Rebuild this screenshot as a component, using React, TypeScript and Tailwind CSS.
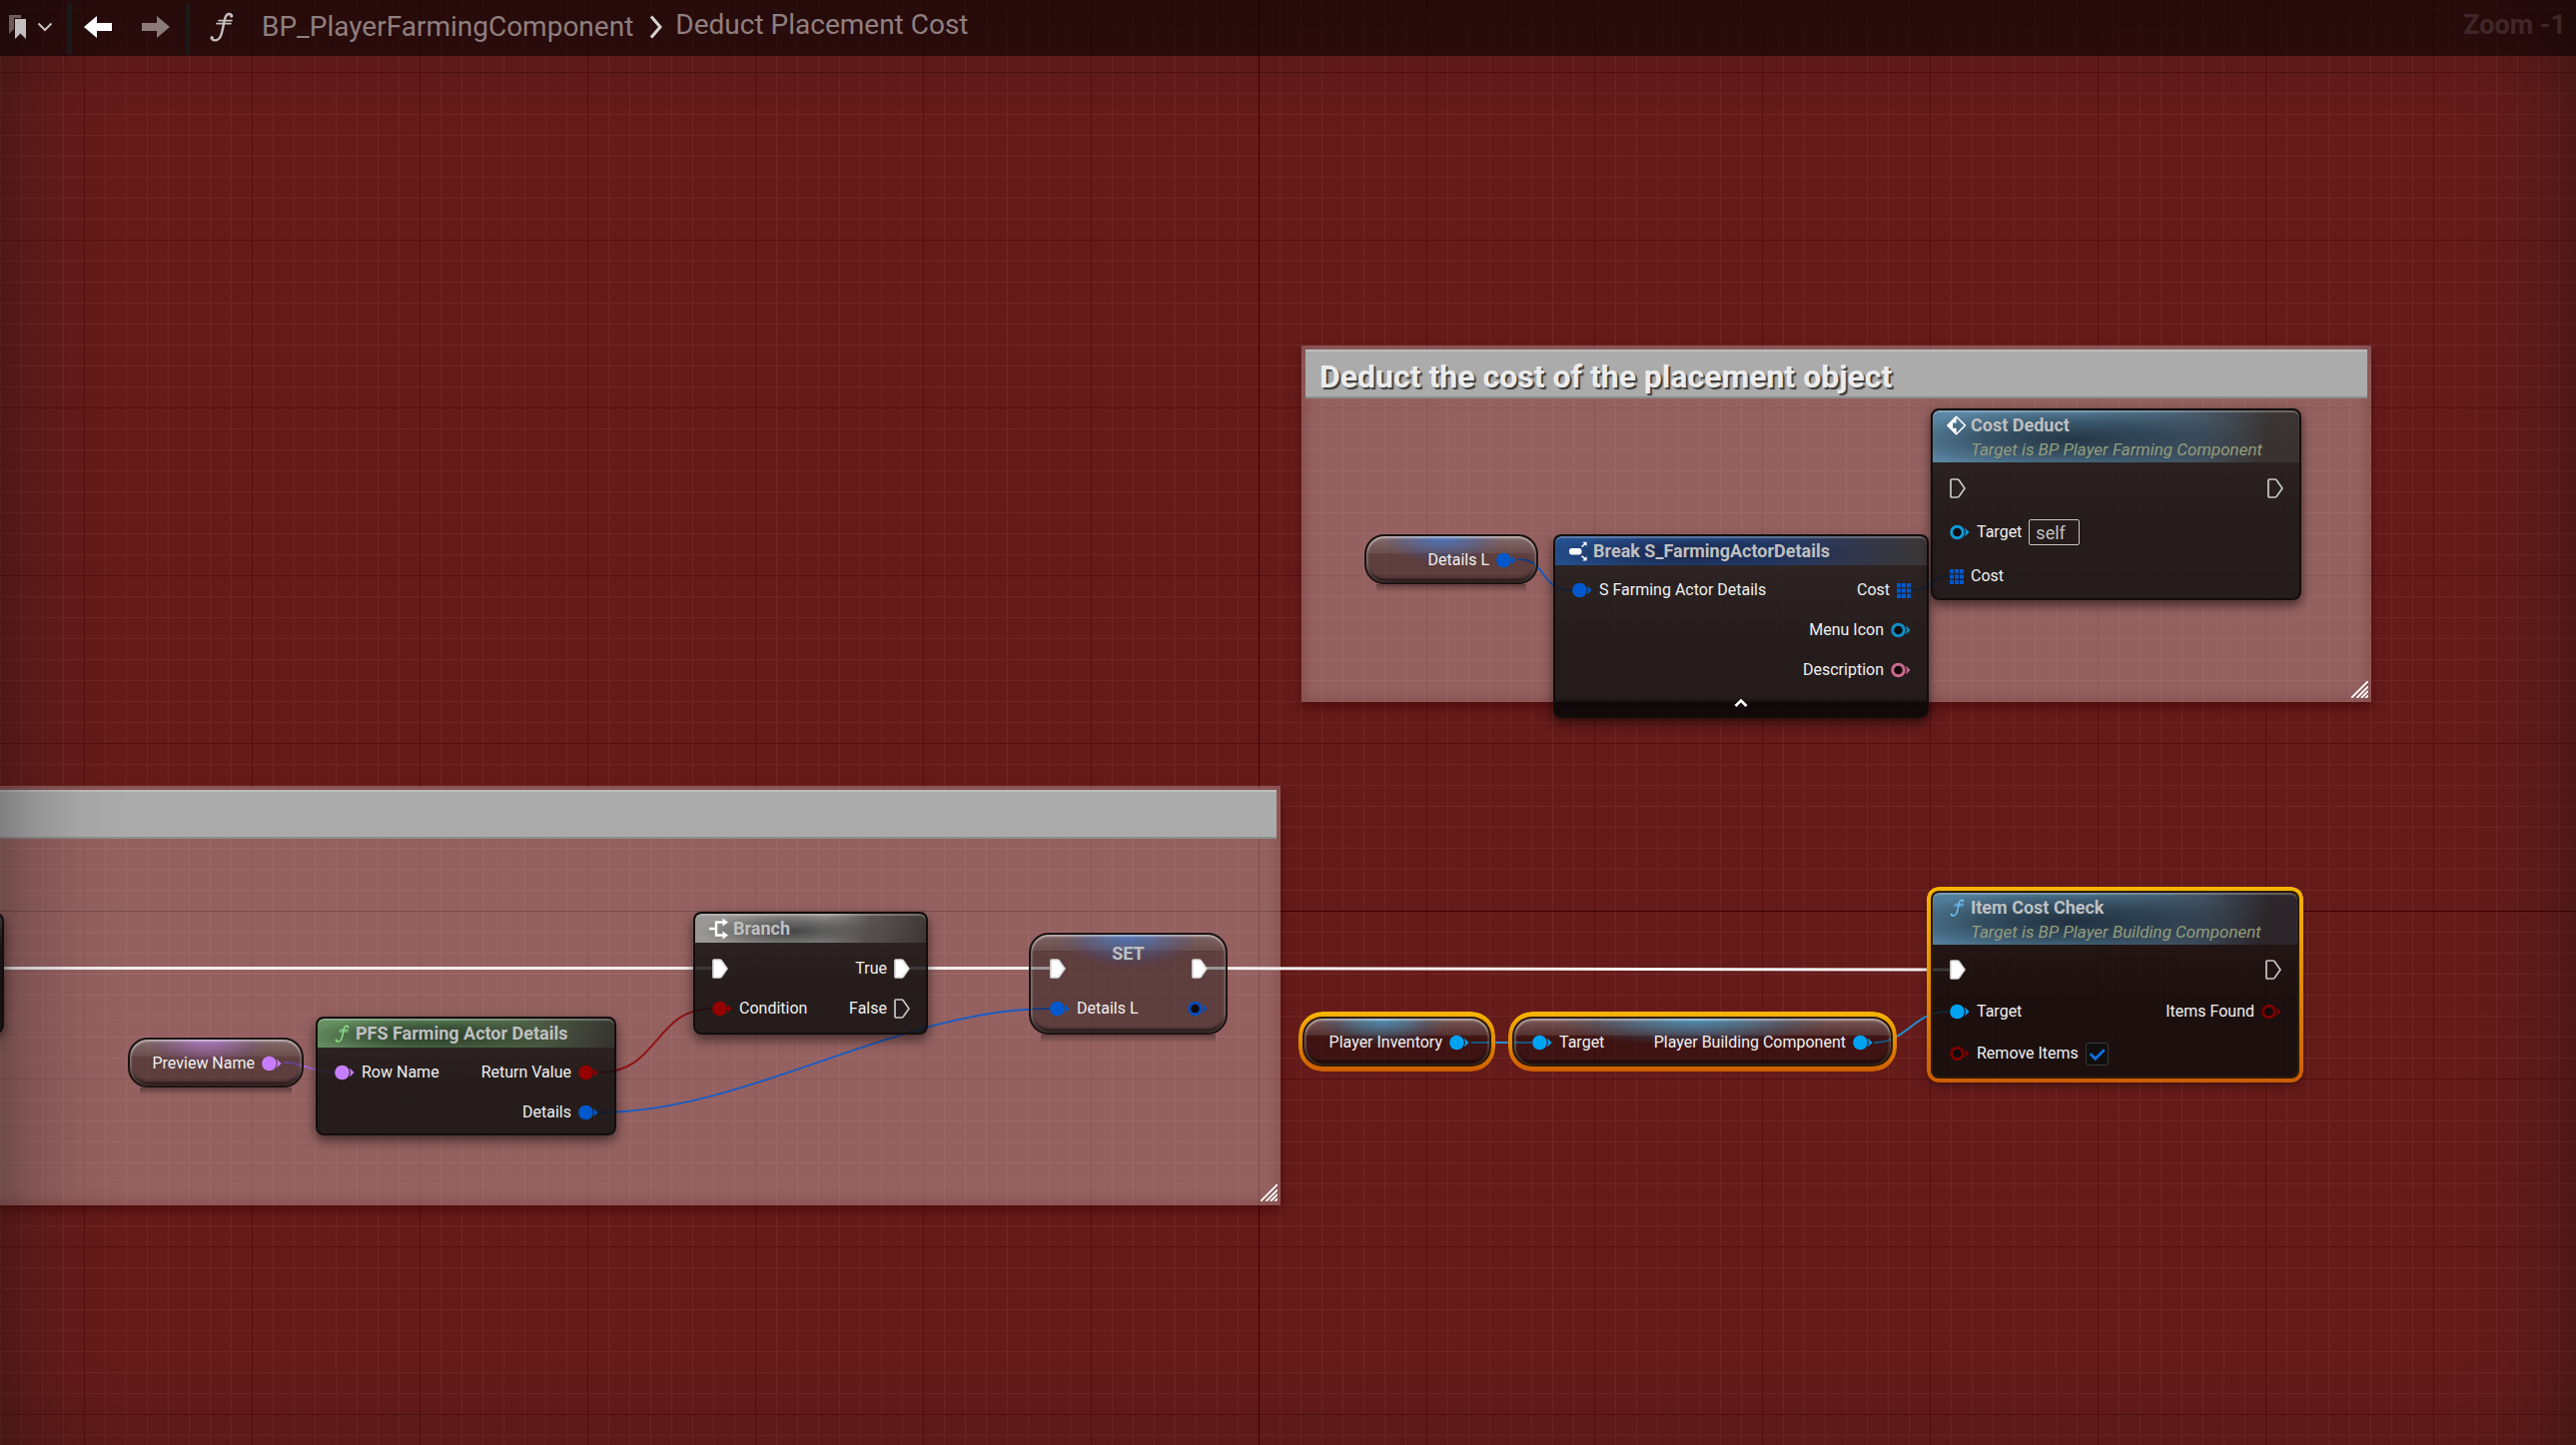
import type { ReactNode } from "react";

const BLUE = "#0058cc";
const SKY = "#00a2f2";
const RED = "#950000";
const VIOLET = "#c77dff";
const PINK = "#c9688f";

/* ---------- pins ---------- */

function Pin({ color, hollow = false }: { color: string; hollow?: boolean }) {
  return (
    <svg width="20" height="16" viewBox="0 0 20 16" className="shrink-0" aria-hidden="true">
      {hollow ? (
        <circle cx="7.5" cy="8" r="5.8" fill="#100c0c" stroke={color} strokeWidth="3" />
      ) : (
        <circle cx="7.5" cy="8" r="7.3" fill={color} />
      )}
      <path d="M15 3.6 L19.6 8 L15 12.4 Q16.8 8 15 3.6 Z" fill={color} />
    </svg>
  );
}

function ExecPin({ filled = false }: { filled?: boolean }) {
  return (
    <svg width="16" height="20" viewBox="0 0 16 20" className="shrink-0" aria-hidden="true">
      <path
        d="M1 2 Q1 1 2 1 H7.5 Q8.5 1 9.2 1.8 L15 10 L9.2 18.2 Q8.5 19 7.5 19 H2 Q1 19 1 18 Z"
        fill={filled ? "#ffffff" : "none"}
        stroke={filled ? "#d8d8d8" : "#c9c9c9"}
        strokeWidth="1.7"
      />
    </svg>
  );
}

function ArrayPin() {
  return (
    <svg width="14" height="15" viewBox="0 0 14 15" className="shrink-0" aria-hidden="true">
      {[0, 5, 10].map((x) =>
        [0, 5.4, 10.8].map((y) => <rect key={`${x}-${y}`} x={x} y={y} width="4" height="4.2" fill={BLUE} />),
      )}
    </svg>
  );
}

/* ---------- icons ---------- */

function FunctionIcon({ className }: { className: string }) {
  return (
    <svg viewBox="0 0 24 30" className={className} fill="none" stroke="currentColor" strokeLinecap="round" aria-hidden="true">
      <path d="M22 4.2 C21.5 1.2 17.2 .8 15.6 5.4 C14.2 9.6 13 18 11.4 23 C9.8 28.4 4 30 1.8 26.4" strokeWidth="2.4" />
      <circle cx="21.6" cy="4" r="1.1" fill="currentColor" />
      <circle cx="2.2" cy="25.6" r="1.1" fill="currentColor" />
      <path d="M9 8.6 H22" strokeWidth="1.7" />
      <path d="M7 11.6 H21" strokeWidth="1.7" />
    </svg>
  );
}

function BreakIcon() {
  return (
    <svg width="20" height="20" viewBox="0 0 20 20" aria-hidden="true">
      <rect x="0" y="7" width="12.5" height="6.4" rx="2.6" fill="#fff" />
      <path d="M12.5 5.5 L16 2.5 M12.5 14.8 L16 17.6" stroke="#fff" strokeWidth="1.6" />
      <path d="M13.4 .8 H17.6 V5 Z M13.4 19.4 H17.6 V15 Z" fill="#fff" />
    </svg>
  );
}

function BranchIcon() {
  return (
    <svg width="20" height="22" viewBox="0 0 20 22" aria-hidden="true">
      <path d="M0 11 H6 M14 4.5 H7 V17.5 H14" fill="none" stroke="#fff" strokeWidth="2.4" />
      <path d="M13.5 .6 L19 4.5 L13.5 8.4 Z M13.5 13.6 L19 17.5 L13.5 21.4 Z" fill="#fff" />
    </svg>
  );
}

function EventIcon() {
  return (
    <svg width="20" height="20" viewBox="0 0 20 20" aria-hidden="true">
      <path d="M9.6 1.2 L18.4 10 L9.6 18.8 L.8 10 Z" fill="none" stroke="#fff" strokeWidth="1.6" strokeLinejoin="round" />
      <path d="M9.6 1 L.6 10 L9.6 19 V12.8 H6 V7.4 H9.6 Z" fill="#fff" />
    </svg>
  );
}

function ResizeHandle() {
  return (
    <svg width="17" height="17" viewBox="0 0 17 17" className="absolute right-[3px] bottom-1" aria-hidden="true">
      <path d="M0 17 L17 0 M5.5 17 L17 5.5 M10 17 L17 10 M14.4 17 L17 14.4" stroke="#fff" strokeWidth="1.9" />
    </svg>
  );
}

/* ---------- node building blocks ---------- */

function SelectionRing({ className }: { className: string }) {
  return (
    <span
      className={`pointer-events-none absolute bg-linear-to-b from-[#f7b500] to-[#cc5c00] [mask:linear-gradient(#000_0_0)_content-box_exclude,linear-gradient(#000_0_0)] ${className}`}
    />
  );
}

function Node({
  place,
  header,
  icon,
  title,
  subtitle,
  selected = false,
  children,
}: {
  place: string;
  header: string;
  icon: ReactNode;
  title: string;
  subtitle?: string;
  selected?: boolean;
  children: ReactNode;
}) {
  return (
    <article className={`absolute rounded-lg shadow-[0_5px_12px_rgba(0,0,0,0.55)] ${place}`}>
      <div
        className={`overflow-hidden rounded-lg border-2 bg-linear-to-b from-[#1a1a19]/82 to-[#0c0d0c]/82 to-60% ${
          selected ? "border-[#2c1c06]" : "border-[#120d0c]"
        }`}
      >
        <header
          className={`flex gap-1 rounded-t-md pl-[14px] shadow-[inset_0_2px_1px_rgba(255,255,255,0.25)] ${
            subtitle ? "h-[52px] pt-0.5" : "h-[29px] items-center"
          } ${header}`}
        >
          <span className="flex h-[26px] w-5 shrink-0 items-center justify-center">{icon}</span>
          <span className="flex flex-col">
            <h3 className="text-[18px] leading-[26px] font-bold whitespace-nowrap text-[#bfc0c1]">{title}</h3>
            {subtitle && (
              <p className="text-[17px] leading-[22px] whitespace-nowrap text-[#949d7c] italic">{subtitle}</p>
            )}
          </span>
        </header>
        {children}
      </div>
      {selected && <SelectionRing className="-inset-1 rounded-xl p-1" />}
    </article>
  );
}

function Row({ height, left, right }: { height: string; left?: ReactNode; right?: ReactNode }) {
  return (
    <div className={`flex items-center justify-between pr-4 pl-[17px] ${height}`}>
      <div className="flex items-center gap-[7px]">{left}</div>
      <div className="flex items-center gap-[7px]">{right}</div>
    </div>
  );
}

function Label({ children }: { children: ReactNode }) {
  return <span className="text-[16px] leading-5 whitespace-nowrap text-[#f0f0f0]">{children}</span>;
}

function Pill({
  place,
  glow,
  selected = false,
  children,
}: {
  place: string;
  glow: string;
  selected?: boolean;
  children: ReactNode;
}) {
  return (
    <article className={`absolute rounded-[20px] ${place}`}>
      <div
        className={`relative flex h-full w-full flex-col justify-center overflow-hidden rounded-[20px] border-2 shadow-[inset_0_2px_2px_rgba(255,255,255,0.45),inset_2px_0_2px_rgba(255,255,255,0.2),inset_-2px_0_2px_rgba(255,255,255,0.15),inset_0_-4px_3px_rgba(0,0,0,0.55)] ${
          selected ? "border-[#2c1c06]" : "border-[#1c1312]"
        } ${glow}`}
      >
        {children}
      </div>
      {selected ? (
        <SelectionRing className="-inset-x-1 -inset-y-[5px] rounded-[24px] px-1 py-[5px]" />
      ) : (
        <span className="pointer-events-none absolute inset-x-3 top-full h-2 bg-linear-to-b from-black/35 to-transparent" />
      )}
    </article>
  );
}

function CommentBox({ place, title }: { place: string; title: string }) {
  return (
    <section
      className={`absolute bg-white/31 px-1 pt-1 shadow-[0_6px_10px_rgba(60,0,0,0.5),inset_0_0_14px_rgba(90,20,20,0.35)] ${place}`}
    >
      <h2 className="h-[49px] border-t-2 border-b-2 border-t-[#bdbdbd] border-b-[#8c8e8e] bg-[#ababab] pl-3.5 text-[32px] leading-[50px] font-bold whitespace-nowrap text-[#ececec] [text-shadow:2px_2px_1px_#3a3a3a]">
        {title}
      </h2>
      <ResizeHandle />
    </section>
  );
}

/* ---------- wires ---------- */

function Wires() {
  return (
    <svg className="pointer-events-none absolute inset-0 h-full w-full" fill="none" aria-hidden="true">
      <g stroke="#f2eeee" strokeWidth="3">
        <path d="M4 969.5 H713" />
        <path d="M911 969.5 H1051" />
        <path d="M1208 969.5 L1952 971" />
      </g>
      <g strokeWidth="2">
        <path d="M284 1064 C305 1064 312 1074 335 1074" stroke="#a06ae0" />
        <path d="M600 1074 C660 1074 655 1010 713 1010" stroke="#8f1414" />
        <path d="M600 1114 C748 1114 900 1010 1051 1010" stroke="#1b5cc4" />
        <path d="M1520 560 C1550 560 1540 591 1574 591" stroke="#1b5cc4" />
        <path d="M1915 591 C1935 591 1932 577 1951 577" stroke="#1b5cc4" />
        <path d="M1473 1044 H1534" stroke="#2090d8" />
        <path d="M1876 1044 C1910 1044 1915 1013 1951 1013" stroke="#2090d8" />
      </g>
    </svg>
  );
}

/* ---------- page ---------- */

function TopBar() {
  return (
    <header className="z-10 col-start-1 row-start-1 flex h-14 items-start justify-between self-start bg-black/55 pr-2.5 pl-2">
      <nav className="flex items-center" aria-label="Breadcrumb">
        <button type="button" aria-label="Bookmarks" className="flex h-[54px] items-center">
          <svg width="19" height="26" viewBox="0 0 19 26" aria-hidden="true">
            <path d="M1 1 H13 V4 H6 V15 L1 20 Z" fill="#6e5c5c" />
            <path d="M7 5 H18 V25 L12.5 19.5 L7 25 Z" fill="#c4bfbf" />
          </svg>
          <svg width="16" height="10" viewBox="0 0 16 10" className="ml-2.5" fill="none" aria-hidden="true">
            <path d="M1.5 1.5 L8 8 L14.5 1.5" stroke="#c4bfbf" strokeWidth="2" />
          </svg>
        </button>
        <span className="mt-0.5 ml-3.5 h-[51px] w-[5px] bg-[#1a1a1a]" />
        <button type="button" aria-label="Back" className="ml-3 flex h-[50px] items-center">
          <svg width="28" height="24" viewBox="0 0 28 24" aria-hidden="true">
            <path d="M0 12 L13 1 V8 H28 V16 H13 V23 Z" fill="#fff" />
          </svg>
        </button>
        <button type="button" aria-label="Forward" className="ml-[30px] flex h-[50px] items-center">
          <svg width="28" height="24" viewBox="0 0 28 24" aria-hidden="true">
            <path d="M28 12 L15 1 V8 H0 V16 H15 V23 Z" fill="#8a7a7a" />
          </svg>
        </button>
        <span className="mt-0.5 ml-4 h-[51px] w-1 bg-[#1a1a1a]" />
        <FunctionIcon className="ml-5 h-[30px] w-6 text-[#c4bfbf]" />
        <a href="#component" className="ml-7 text-[28px] leading-[54px] text-[#8f7f7f]">
          BP_PlayerFarmingComponent
        </a>
        <svg width="14" height="24" viewBox="0 0 14 24" className="ml-4" fill="none" aria-hidden="true">
          <path d="M2 1.5 L11 12 L2 22.5" stroke="#d8d2d2" strokeWidth="3" />
        </svg>
        <a href="#function" className="mb-1 ml-3 text-[28px] leading-[50px] text-[#8f7f7f]">
          Deduct Placement Cost
        </a>
      </nav>
      <p className="text-[27px] leading-[50px] font-bold text-[#402628]">Zoom -1</p>
    </header>
  );
}

export default function App() {
  return (
    <div className="grid min-h-screen overflow-hidden font-['Roboto','Liberation_Sans',sans-serif]">
      <TopBar />
      <main className="relative col-start-1 row-start-1 min-h-screen overflow-hidden bg-[#651b1a] bg-[linear-gradient(#3f0000,#3f0000),linear-gradient(#3f0000,#3f0000),linear-gradient(to_right,#560e0f_1px,transparent_1px),linear-gradient(#560e0f_1px,transparent_1px),linear-gradient(to_right,#702625_1px,transparent_1px),linear-gradient(#702625_1px,transparent_1px)] [background-position:1260px_0,0_912px,84px_0,0_72px,0_0,0_9px] [background-repeat:no-repeat,no-repeat,repeat,repeat,repeat,repeat] [background-size:1px_100%,100%_1px,168px_168px,168px_168px,21px_21px,21px_21px]">
        <CommentBox place="left-[1303px] top-[346px] h-[357px] w-[1071px]" title="Deduct the cost of the placement object" />
        <CommentBox place="-left-5 top-[787px] h-[420px] w-[1302px]" title="" />

        <Wires />

        <span className="absolute top-[914px] -left-4 h-[121px] w-5 rounded-lg border-2 border-[#120d0c] bg-linear-to-b from-[#4a4544] to-[#1a1513] to-30% shadow-[0_5px_12px_rgba(0,0,0,0.55)]" />

        <Pill
          place="left-[1366px] top-[535px] h-[50px] w-[174px]"
          glow="bg-[radial-gradient(ellipse_36%_60%_at_45%_0%,rgba(50,120,220,0.7),rgba(50,90,180,0.2)_75%,transparent),linear-gradient(rgba(255,255,255,0.24),rgba(255,255,255,0.08)_36%,transparent_36%),linear-gradient(rgba(8,8,8,0.39),rgba(8,8,8,0.39))]"
        >
          <div className="flex items-center justify-end gap-[7px] px-5 pt-0.5">
            <Label>Details L</Label>
            <Pin color={BLUE} />
          </div>
        </Pill>

        <Node
          place="left-[1555px] top-[535px] w-[376px]"
          header="bg-[radial-gradient(ellipse_42%_70%_at_38%_60%,rgba(26,32,64,0.9),rgba(26,32,64,0.55)_50%,transparent),linear-gradient(100deg,#24508f_45%,rgba(44,72,128,0.5)_75%,rgba(70,66,64,0.6))]"
          icon={<BreakIcon />}
          title="Break S_FarmingActorDetails"
        >
          <div className="pt-[5px]">
            <Row height="h-10" left={<><Pin color={BLUE} /><Label>S Farming Actor Details</Label></>} right={<><Label>Cost</Label><ArrayPin /></>} />
            <Row height="h-10" right={<><Label>Menu Icon</Label><Pin color="#0f8ec6" hollow /></>} />
            <Row height="h-10" right={<><Label>Description</Label><Pin color={PINK} hollow /></>} />
          </div>
          <button type="button" aria-label="Collapse" className="mt-2 flex h-[18px] w-full justify-center bg-linear-to-b from-transparent via-black/35 via-20% to-black/35">
            <svg width="14" height="10" viewBox="0 0 14 10" fill="none" aria-hidden="true">
              <path d="M1.5 8 L7 2.5 L12.5 8" stroke="#fff" strokeWidth="2.6" />
            </svg>
          </button>
        </Node>

        <Node
          place="left-[1933px] top-[409px] w-[371px]"
          header="bg-[radial-gradient(ellipse_48%_62%_at_38%_56%,rgba(34,50,64,0.95),rgba(34,50,64,0.6)_50%,transparent),linear-gradient(105deg,#5a86a3_40%,rgba(84,118,144,0.6)_72%,rgba(70,66,64,0.5)_90%)]"
          icon={<EventIcon />}
          title="Cost Deduct"
          subtitle="Target is BP Player Farming Component"
        >
          <div className="pt-1">
            <Row height="h-11" left={<ExecPin />} right={<ExecPin />} />
            <Row
              height="h-11"
              left={
                <>
                  <Pin color="#0f9ad6" hollow />
                  <label htmlFor="target" className="text-[16px] leading-5 text-[#f0f0f0]">Target</label>
                  <input
                    id="target"
                    defaultValue="self"
                    className="h-[26px] w-[51px] rounded-xs border border-[#c4c4c4] bg-transparent px-1.5 text-[18px] leading-5 text-[#c2c2c2]"
                  />
                </>
              }
            />
            <Row height="h-11" left={<><ArrayPin /><Label>Cost</Label></>} />
          </div>
        </Node>

        <Pill
          place="left-[128px] top-[1039px] h-[50px] w-[176px]"
          glow="bg-[radial-gradient(ellipse_36%_60%_at_45%_0%,rgba(190,125,235,0.65),rgba(130,80,160,0.2)_75%,transparent),linear-gradient(rgba(255,255,255,0.24),rgba(255,255,255,0.08)_36%,transparent_36%),linear-gradient(rgba(8,8,8,0.39),rgba(8,8,8,0.39))]"
        >
          <div className="flex items-center justify-end gap-[7px] px-5 pt-0.5">
            <Label>Preview Name</Label>
            <Pin color={VIOLET} />
          </div>
        </Pill>

        <Node
          place="left-[316px] top-[1018px] w-[301px]"
          header="bg-[radial-gradient(ellipse_42%_70%_at_38%_60%,rgba(34,46,32,0.9),rgba(34,46,32,0.55)_50%,transparent),linear-gradient(105deg,#658f60_40%,rgba(96,130,90,0.6)_72%,rgba(60,60,56,0.6))]"
          icon={<FunctionIcon className="h-[18px] w-[15px] text-[#90e08c]" />}
          title="PFS Farming Actor Details"
        >
          <div className="pt-[5px] pb-px">
            <Row height="h-10" left={<><Pin color={VIOLET} /><Label>Row Name</Label></>} right={<><Label>Return Value</Label><Pin color={RED} /></>} />
            <Row height="h-10" right={<><Label>Details</Label><Pin color={BLUE} /></>} />
          </div>
        </Node>

        <Node
          place="left-[694px] top-[913px] w-[235px]"
          header="bg-[radial-gradient(ellipse_40%_66%_at_42%_60%,rgba(60,60,60,0.9),rgba(60,60,60,0.5)_50%,transparent),linear-gradient(105deg,#9a9897_55%,rgba(120,116,114,0.6)_74%,rgba(70,66,64,0.6))]"
          icon={<BranchIcon />}
          title="Branch"
        >
          <div className="pt-1.5 pb-1">
            <Row height="h-10" left={<ExecPin filled />} right={<><Label>True</Label><ExecPin filled /></>} />
            <Row height="h-10" left={<><Pin color={RED} /><Label>Condition</Label></>} right={<><Label>False</Label><ExecPin /></>} />
          </div>
        </Node>

        <Pill
          place="left-[1030px] top-[934px] h-[102px] w-[199px]"
          glow="bg-[radial-gradient(ellipse_36%_34%_at_50%_0%,rgba(60,125,215,0.7),rgba(60,80,160,0.18)_80%,transparent),linear-gradient(rgba(255,255,255,0.2),rgba(255,255,255,0.08)_16%,transparent_16%),linear-gradient(rgba(8,8,8,0.39),rgba(8,8,8,0.39))]"
        >
          <h3 className="absolute inset-x-0 top-[7px] text-center text-[18px] leading-6 font-bold text-[#bfc0c1]">SET</h3>
          <div className="px-0.5 pt-2.5">
            <Row height="h-10" left={<ExecPin filled />} right={<ExecPin filled />} />
            <Row height="h-10" left={<><Pin color={BLUE} /><Label>Details L</Label></>} right={<Pin color="#0a4cb4" hollow />} />
          </div>
        </Pill>

        <Pill
          place="left-[1304px] top-[1018px] h-[50px] w-[189px]"
          selected
          glow="bg-[radial-gradient(ellipse_36%_60%_at_42%_0%,rgba(60,160,210,0.75),rgba(50,90,120,0.3)_75%,transparent),linear-gradient(rgba(255,255,255,0.3),rgba(255,255,255,0.12)_36%,transparent_36%),linear-gradient(rgba(8,8,8,0.42),rgba(8,8,8,0.42))]"
        >
          <div className="flex items-center justify-end gap-[7px] px-5 pt-0.5">
            <Label>Player Inventory</Label>
            <Pin color={SKY} />
          </div>
        </Pill>

        <Pill
          place="left-[1514px] top-[1018px] h-[50px] w-[381px]"
          selected
          glow="bg-[radial-gradient(ellipse_36%_60%_at_48%_0%,rgba(60,160,210,0.75),rgba(50,90,120,0.3)_75%,transparent),linear-gradient(rgba(255,255,255,0.3),rgba(255,255,255,0.12)_36%,transparent_36%),linear-gradient(rgba(8,8,8,0.42),rgba(8,8,8,0.42))]"
        >
          <div className="flex items-center justify-between px-[18px] pt-0.5">
            <div className="flex items-center gap-[7px]">
              <Pin color={SKY} />
              <Label>Target</Label>
            </div>
            <div className="flex items-center gap-[7px]">
              <Label>Player Building Component</Label>
              <Pin color={SKY} />
            </div>
          </div>
        </Pill>

        <Node
          place="left-[1933px] top-[892px] w-[369px]"
          selected
          header="bg-[radial-gradient(ellipse_48%_62%_at_38%_56%,rgba(30,44,56,0.95),rgba(30,44,56,0.6)_50%,transparent),linear-gradient(105deg,#527d9a_40%,rgba(80,114,140,0.6)_72%,rgba(50,48,56,0.6)_90%)]"
          icon={<FunctionIcon className="h-[18px] w-[15px] text-[#6cc0f5]" />}
          title="Item Cost Check"
          subtitle="Target is BP Player Building Component"
        >
          <div className="pt-1 pb-0.5">
            <Row height="h-[42px]" left={<ExecPin filled />} right={<ExecPin />} />
            <Row height="h-[42px]" left={<><Pin color={SKY} /><Label>Target</Label></>} right={<><Label>Items Found</Label><Pin color="#7a0000" hollow /></>} />
            <Row
              height="h-[42px]"
              left={
                <>
                  <Pin color="#7a0000" hollow />
                  <label htmlFor="remove-items" className="text-[16px] leading-5 whitespace-nowrap text-[#f0f0f0]">Remove Items</label>
                  <span className="relative flex size-[23px]">
                    <input
                      id="remove-items"
                      type="checkbox"
                      defaultChecked
                      className="peer size-full appearance-none rounded-[3px] border border-[#383838] bg-[#0f0f0f]"
                    />
                    <svg viewBox="0 0 23 23" className="pointer-events-none absolute inset-0 hidden peer-checked:block" fill="none" aria-hidden="true">
                      <path d="M5.5 12 L9.8 16.3 L18 8" stroke="#0b70e0" strokeWidth="2.8" strokeLinecap="round" />
                    </svg>
                  </span>
                </>
              }
            />
          </div>
        </Node>

        <div className="pointer-events-none absolute inset-0 bg-[linear-gradient(to_right,rgba(20,16,16,0.28),rgba(20,16,16,0.15)_33px,rgba(20,16,16,0.04)_80px,transparent_130px),linear-gradient(to_left,rgba(20,16,16,0.28),rgba(20,16,16,0.15)_33px,rgba(20,16,16,0.04)_80px,transparent_130px),linear-gradient(to_bottom,rgba(20,16,16,0.2),transparent_120px),linear-gradient(to_top,rgba(20,16,16,0.12),transparent_90px)]" />
      </main>
    </div>
  );
}
